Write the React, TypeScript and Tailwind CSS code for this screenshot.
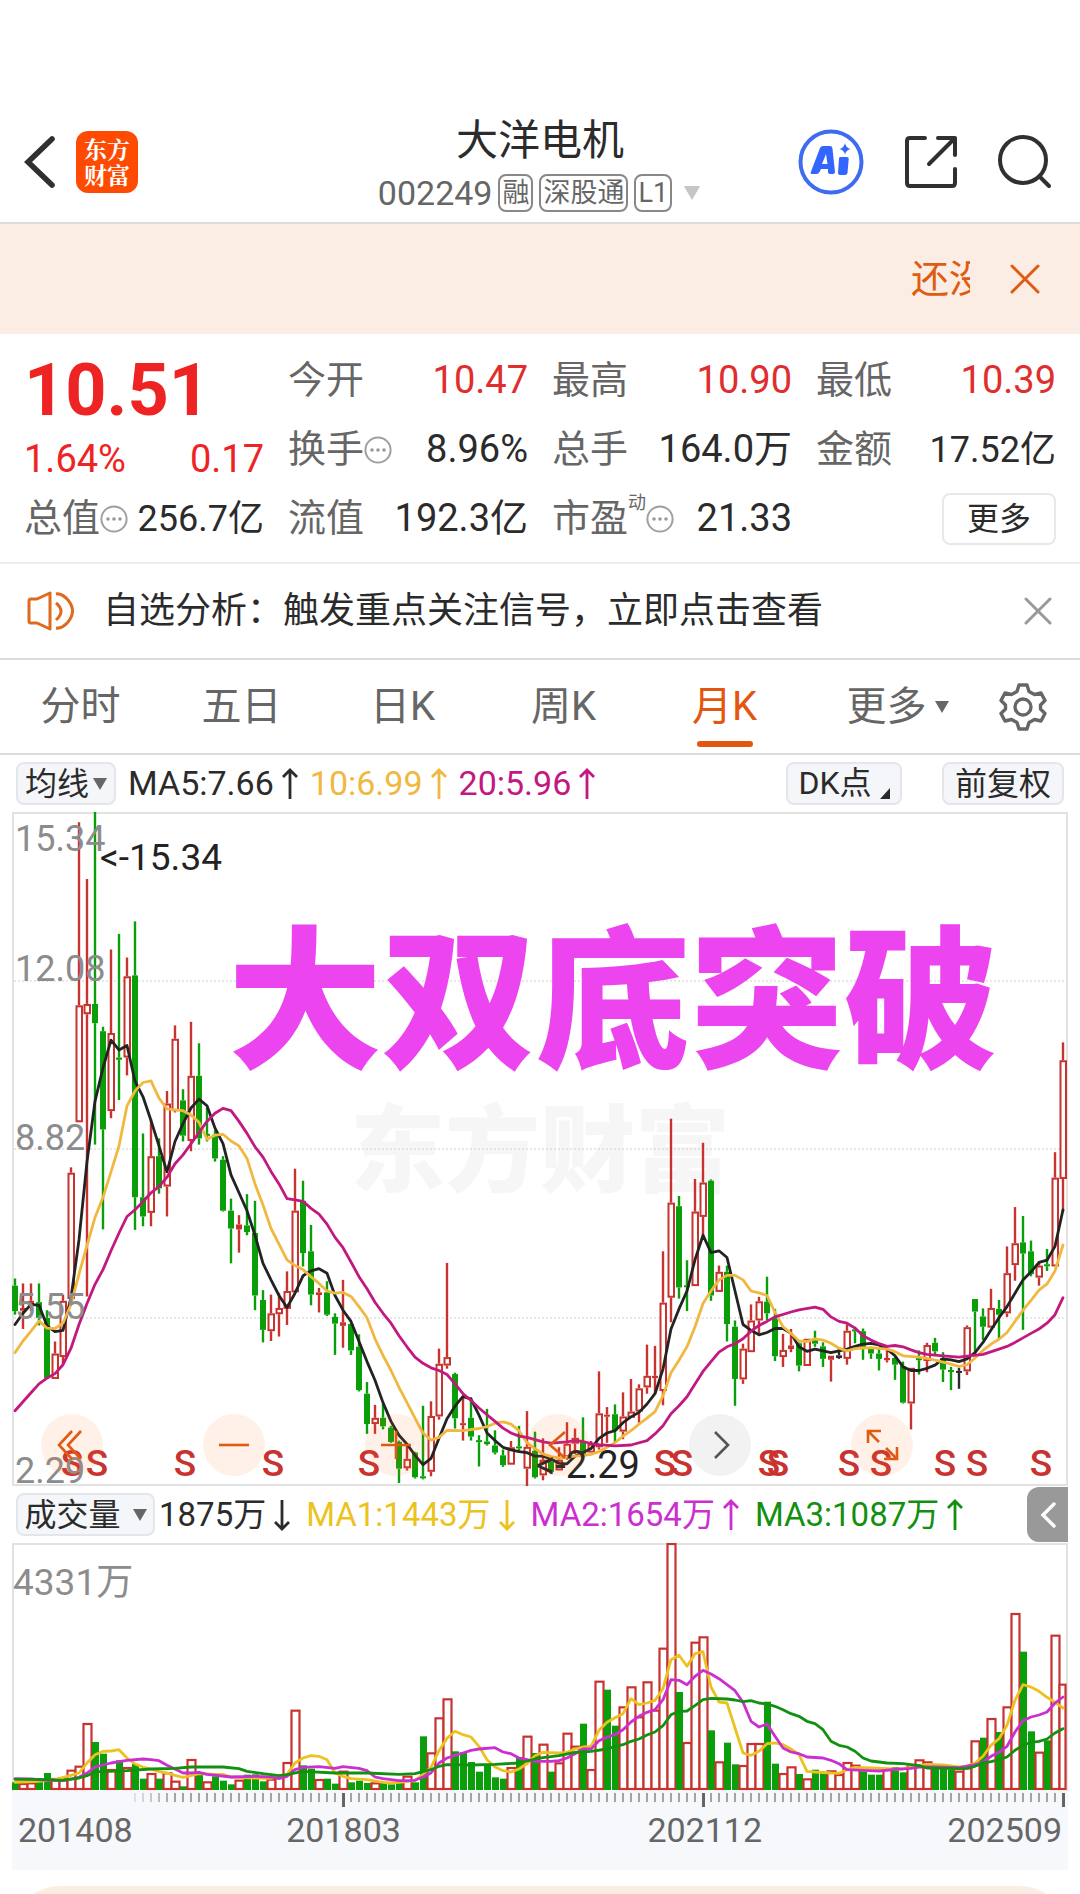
import React from "react";

type Tone = "r" | "g" | "k";
type Candle = [Tone, number, number, number, number];

const RED = "#c8332f";
const GREEN = "#0a9f0a";
const TONES: Record<Tone, string> = { r: RED, g: GREEN, k: "#2b2b2b" };

/* One candle per month: tone, high, body top, body bottom, low (plot units, downwards). */
const CANDLES = `g 1072 1088 1145 1153|r 1083 1138 1144 1185|r 1083 1122 1130 1145|g 1083 1125 1160 1177|g 1143 1160 1295 1297|r 1213 1240 1297 1297|r 1108 1122 1248 1265|r 823 835 1118 1118|r 50 460 722 722|r 177 457 480 1112|g 27 457 500 772|g 508 518 738 962|r 335 522 697 713|g 300 577 582 672|r 353 395 577 617|g 272 393 890 963|g 747 890 933 955|r 715 798 925 955|g 758 798 870 882|r 652 680 866 933|r 505 535 697 700|g 648 673 752 765|r 497 618 764 787|g 545 618 758 772|g 690 748 752 765|g 740 750 803 810|g 798 806 920 922|g 893 920 960 1038|r 930 951 962 1014|g 883 953 968 975|g 898 970 1110 1143|g 1098 1120 1187 1215|r 1108 1150 1190 1212|r 1105 1138 1152 1202|r 1056 1100 1140 1176|r 826 920 1103 1103|g 853 898 1015 1045|g 952 1011 1108 1132|r 1093 1103 1109 1148|g 1078 1103 1153 1156|g 1150 1158 1173 1243|r 1075 1170 1178 1227|g 1172 1174 1233 1243|g 1197 1225 1322 1325|g 1304 1330 1398 1420|r 1355 1384 1398 1420|g 1353 1384 1403 1410|g 1402 1406 1438 1440|g 1435 1438 1498 1530|r 1445 1476 1497 1502|g 1460 1462 1517 1520|g 1357 1515 1519 1522|r 1347 1380 1505 1515|r 1229 1263 1381 1388|r 1037 1248 1267 1274|g 1283 1286 1385 1408|r 1335 1396 1399 1435|g 1338 1384 1426 1435|g 1423 1434 1437 1493|g 1364 1437 1443 1446|g 1412 1446 1462 1466|g 1455 1468 1490 1494|r 1436 1450 1489 1489|g 1402 1448 1452 1458|r 1369 1449 1498 1538|g 1415 1458 1517 1520|r 1430 1478 1513 1524|g 1470 1482 1505 1510|r 1450 1478 1502 1502|r 1394 1442 1472 1478|r 1408 1429 1442 1465|g 1383 1438 1470 1475|r 1436 1442 1462 1462|r 1280 1374 1450 1455|r 1360 1377 1381 1440|g 1354 1376 1412 1440|r 1327 1381 1415 1432|r 1297 1370 1384 1384|r 1309 1318 1370 1395|r 1220 1290 1316 1330|r 1223 1290 1295 1330|r 1011 1126 1324 1356|r 714 902 1115 1170|g 887 910 1092 1117|g 1031 1087 1091 1145|r 849 922 1089 1089|r 768 857 934 975|g 850 853 1110 1122|r 1043 1057 1102 1102|g 1043 1057 1174 1213|g 1166 1180 1297 1357|r 1218 1229 1298 1308|r 1130 1166 1237 1237|r 1113 1123 1166 1195|g 1068 1124 1150 1165|g 1140 1158 1246 1257|r 1196 1232 1248 1270|r 1185 1222 1230 1237|g 1215 1217 1267 1280|r 1207 1207 1268 1268|g 1189 1206 1218 1225|g 1215 1224 1252 1270|r 1245 1245 1254 1303|k 1230 1244 1250 1252|r 1175 1189 1252 1265|g 1180 1186 1190 1217|g 1184 1190 1225 1254|g 1225 1227 1240 1252|g 1228 1240 1252 1278|r 1228 1250 1255 1260|g 1248 1250 1265 1299|g 1258 1268 1350 1352|r 1272 1272 1352 1410|g 1233 1250 1255 1287|r 1216 1221 1257 1282|g 1205 1216 1235 1243|g 1237 1250 1276 1304|g 1270 1277 1280 1322|k 1272 1279 1282 1319|r 1177 1181 1280 1288|g 1118 1118 1146 1243|g 1139 1157 1180 1210|r 1095 1138 1182 1182|g 1120 1140 1153 1208|r 1000 1060 1150 1158|r 912 993 1042 1077|g 932 991 1016 1187|g 987 1011 1062 1067|r 1037 1043 1070 1088|g 1006 1040 1044 1055|r 789 846 1045 1045|r 543 583 849 922`
  .split("|")
  .map((row) => {
    const [tone, ...n] = row.split(" ");
    return [tone, ...n.map(Number)] as Candle;
  });

/* Moving averages: "month,value" pairs. */
const MA5 =
  "0,1175 1,1150 2,1130 3,1132 4,1178 5,1191 6,1188 7,1115 8,985 9,810 10,675 11,600 12,538 13,560 14,550 15,630 16,665 17,718 18,775 19,833 20,765 21,725 22,690 23,670 24,685 25,735 26,770 27,840 28,880 29,920 30,975 31,1038 32,1075 33,1110 34,1137 35,1105 36,1066 37,1055 38,1050 39,1060 40,1110 41,1143 42,1168 43,1213 44,1258 45,1300 46,1350 47,1392 48,1423 49,1443 50,1468 51,1489 52,1475 53,1430 54,1386 55,1358 56,1336 57,1342 58,1378 59,1418 60,1435 61,1450 62,1456 63,1460 64,1462 65,1470 66,1470 67,1476 68,1486 69,1487 70,1470 71,1462 72,1453 73,1430 74,1418 75,1413 76,1395 77,1382 78,1372 79,1353 80,1330 81,1275 82,1185 83,1140 84,1100 85,1030 86,975 87,1014 88,1010 89,1025 90,1100 91,1175 92,1188 93,1198 94,1193 95,1184 96,1184 97,1195 98,1225 99,1235 100,1230 101,1234 102,1238 103,1234 104,1230 105,1224 106,1219 107,1217 108,1221 109,1230 110,1245 111,1270 112,1278 113,1278 114,1273 115,1266 116,1252 117,1254 118,1258 119,1252 120,1238 121,1215 122,1187 123,1160 124,1135 125,1105 126,1075 127,1057 128,1036 129,1031 130,1000 131,918";
const MA10 =
  "0,1238 1,1212 2,1190 3,1167 4,1183 5,1184 6,1172 7,1130 8,1062 9,998 10,935 11,890 12,833 13,775 14,685 15,652 16,633 17,629 18,668 19,692 20,694 21,696 22,706 23,722 24,760 25,751 26,749 27,764 28,775 29,803 30,860 31,907 32,960 33,995 34,1030 35,1043 36,1052 37,1068 38,1083 39,1100 40,1105 41,1103 42,1112 43,1135 44,1160 45,1207 46,1244 47,1278 48,1316 49,1350 50,1385 51,1418 52,1434 53,1428 54,1412 56,1413 58,1408 59,1404 60,1396 61,1393 62,1398 63,1413 64,1440 65,1453 66,1465 67,1471 68,1474 70,1470 71,1468 72,1466 73,1460 74,1450 75,1440 76,1425 77,1413 78,1398 79,1385 80,1370 81,1335 82,1283 83,1255 84,1225 85,1180 86,1128 87,1100 88,1075 89,1065 90,1065 91,1075 92,1100 93,1104 94,1110 95,1148 96,1180 97,1195 98,1212 99,1213 100,1207 101,1210 102,1217 103,1228 104,1234 105,1229 107,1227 109,1230 110,1236 111,1245 113,1248 114,1251 115,1255 117,1264 118,1269 119,1265 120,1250 121,1233 122,1219 123,1208 124,1193 125,1168 126,1143 127,1121 128,1098 129,1084 130,1055 131,997";
const MA20 =
  "0,1368 1,1348 2,1328 3,1308 4,1295 5,1285 6,1265 7,1228 8,1175 9,1128 10,1085 11,1052 12,1010 13,970 14,933 15,918 16,900 17,880 18,866 19,845 20,815 21,795 22,770 23,745 24,720 25,702 26,691 27,696 28,720 29,747 30,777 31,800 32,832 33,860 34,893 35,896 36,899 37,915 38,928 39,950 40,980 41,1003 42,1035 43,1068 44,1095 45,1125 46,1150 47,1172 48,1200 49,1225 50,1248 51,1262 52,1272 53,1278 54,1287 55,1308 56,1330 57,1345 58,1362 59,1377 60,1392 61,1407 62,1418 63,1425 64,1428 66,1438 67,1441 69,1438 70,1435 71,1437 72,1442 73,1444 75,1447 77,1445 79,1435 80,1420 81,1402 82,1375 83,1357 84,1337 85,1308 86,1280 87,1258 88,1237 89,1225 90,1218 91,1207 92,1190 93,1177 94,1168 95,1158 97,1147 98,1142 100,1136 101,1141 102,1158 103,1168 104,1172 105,1183 106,1200 107,1210 108,1218 109,1224 110,1222 111,1225 112,1232 113,1238 114,1242 116,1245 118,1248 119,1246 121,1242 123,1230 124,1224 125,1215 126,1205 127,1195 128,1185 129,1172 130,1153 131,1115";

/* Volume bars: tone and bar top. */
const VOLUMES =
  "g908 r910 r908 g905 g880 r895 r893 r870 r858 r730 g787 g822 r868 g842 r862 g853 g897 r880 g897 r878 r903 g920 r838 g878 r905 g890 g903 g914 r900 g885 g884 g905 r897 r890 r847 r690 g857 g867 r898 g897 g912 r873 g908 g903 g910 r908 g907 g914 g908 r888 g908 g770 r818 r713 r656 g815 g818 g847 g876 g853 g893 g897 r862 g832 r768 g820 r792 g876 r848 r759 r798 g732 r868 r603 g630 g738 r680 r620 r710 r605 r690 r504 r190 g637 r787 r486 r470 g752 r845 g789 g854 r856 r790 r790 g666 g852 r880 r860 g883 r896 g870 g880 r872 r883 r847 r855 g875 g885 g885 r868 g862 g878 r858 r839 r845 g866 g868 g870 r873 r863 r782 g774 r715 g757 r680 r400 g516 g755 r816 g782 r465 r612"
    .split(" ")
    .map((s) => [s[0], Number(s.slice(1))] as [Tone, number]);
const VMA1 =
  "0,908 3,905 5,900 7,887 8,880 9,850 10,825 11,815 12,814 13,810 14,835 15,853 16,862 17,868 18,876 19,880 20,887 21,893 22,888 23,882 25,884 26,884 27,892 30,895 32,896 34,884 35,850 36,835 37,828 38,830 39,840 40,880 41,890 42,897 44,900 46,908 47,910 49,906 50,902 51,884 52,863 53,813 54,776 55,755 56,765 57,772 58,800 59,840 60,862 61,873 62,877 63,868 64,852 65,828 66,818 68,820 69,818 70,808 71,802 72,800 73,752 74,728 75,714 76,702 77,657 78,675 79,670 80,662 81,627 82,540 83,527 84,560 85,522 86,516 87,622 88,667 89,670 90,745 91,820 92,827 93,815 94,792 95,790 96,795 97,808 98,825 99,875 100,877 102,880 103,881 104,870 105,863 107,865 110,868 111,868 112,862 113,857 114,854 116,856 118,862 119,860 120,850 121,830 122,797 123,777 124,737 125,662 126,615 127,622 128,635 129,653 130,668 131,685";
const VMA2 =
  "0,897 2,898 4,902 6,903 7,898 8,893 9,880 10,862 12,850 14,842 16,838 17,840 18,843 19,857 20,868 21,880 22,880 23,878 24,884 27,892 30,890 32,892 33,897 34,890 35,870 36,863 38,861 40,866 41,861 43,866 44,873 45,892 46,897 48,903 49,903 50,902 51,892 52,880 53,850 54,835 55,827 56,820 57,812 58,808 60,804 61,817 62,822 63,835 64,840 65,845 67,845 68,843 69,835 70,822 71,808 72,808 73,783 74,772 75,765 76,750 77,727 78,710 79,698 80,690 81,660 82,600 83,602 84,615 85,590 86,572 87,583 88,597 89,615 90,633 91,668 92,725 93,742 94,733 95,770 96,805 97,817 98,822 99,832 101,835 102,842 103,852 104,870 106,872 108,874 110,869 112,866 113,862 115,862 118,864 120,855 121,848 122,830 123,818 124,800 125,757 126,723 127,712 128,706 129,697 130,670 131,652";
const VMA3 =
  "0,899 3,899 6,902 8,895 9,888 10,876 11,876 14,873 17,868 20,866 22,862 26,862 28,867 29,875 31,882 33,888 34,885 36,875 40,880 44,880 48,884 50,882 52,870 53,860 54,855 57,856 60,854 63,850 65,838 66,834 68,828 70,818 72,815 74,808 75,800 76,795 77,785 78,778 79,766 80,757 81,738 82,705 83,695 84,694 85,678 86,660 87,656 89,658 90,661 91,666 92,663 93,670 94,673 95,680 96,690 97,702 98,710 99,725 100,732 101,750 102,785 103,797 104,802 105,815 106,835 107,844 109,850 111,852 112,855 113,858 114,865 116,866 118,867 119,866 120,860 121,850 122,846 123,840 124,832 125,812 126,797 127,788 128,785 129,778 130,760 131,747";

const monthX = (i: number) => 3 + 8 * i;
const priceY = (v: number) => (v - 27) / 2.24;
const volumeY = (v: number) => (v - 190) / 3;

const toPoints = (pairs: string, y: (v: number) => number) =>
  pairs
    .split(" ")
    .map((p) => {
      const [i, v] = p.split(",").map(Number);
      return `${monthX(i)},${y(v).toFixed(1)}`;
    })
    .join(" ");

function Line({ data, y, color }: { data: string; y: (v: number) => number; color: string }) {
  return <polyline points={toPoints(data, y)} fill="none" stroke={color} strokeWidth={2.8} strokeLinejoin="round" strokeLinecap="round" />;
}

const S_MARKS = [60, 85, 173, 261, 357, 653, 670, 757, 766, 837, 869, 933, 965, 1029];
const PRICE_LABELS: [string, number][] = [
  ["15.34", 39],
  ["12.08", 169],
  ["8.82", 338],
  ["5.55", 507],
  ["2.29", 671],
];

function PriceChart() {
  return (
    <svg viewBox="0 0 1056 674" className="block w-full font-['Roboto','Noto_Sans_CJK_SC',sans-serif]" role="img" aria-label="月K线图">
      <rect x="1" y="1" width="1054" height="672" fill="#fff" stroke="#e2e2e2" strokeWidth="2" />
      <text x="528" y="373" textAnchor="middle" fontSize="95" fontWeight="800" fill="#f6f6f6">
        东方财富
      </text>
      {[169, 337, 506].map((y) => (
        <line key={y} x1="2" x2="1054" y1={y} y2={y} stroke="#cfcfcf" strokeDasharray="2 2" />
      ))}
      {CANDLES.map(([tone, high, top, bottom, low], i) => {
        const x = monthX(i);
        const color = TONES[tone];
        const t = priceY(top);
        const h = Math.max(priceY(bottom) - t, 2);
        const hollow = tone === "r" && h > 5;
        return (
          <g key={i}>
            <line x1={x} x2={x} y1={priceY(high)} y2={t} stroke={color} strokeWidth={2.4} />
            <line x1={x} x2={x} y1={t + h} y2={priceY(low)} stroke={color} strokeWidth={2.4} />
            {hollow ? (
              <rect x={x - 2.5} y={t + 1} width={5.5} height={h - 2} fill="#fff" stroke={color} strokeWidth={2} />
            ) : (
              <rect x={x - 3} y={t} width={6} height={h} fill={color} />
            )}
          </g>
        );
      })}
      <Line data={MA5} y={priceY} color="#232323" />
      <Line data={MA10} y={priceY} color="#f0b840" />
      <Line data={MA20} y={priceY} color="#c2187f" />
      {S_MARKS.map((x) => (
        <text key={x} x={x} y={664} textAnchor="middle" fontSize="37" fontWeight="500" fill={RED}>
          S
        </text>
      ))}
      {PRICE_LABELS.map(([label, y]) => (
        <text key={label} x={3} y={y} fontSize="36" fill="#8c8c8c">
          {label}
        </text>
      ))}
      <text x="88" y="58" fontSize="37" fill="#232323">
        &lt;-15.34
      </text>
      <text x="524" y="666" fontSize="38" fill="#232323">
        &lt;-2.29
      </text>
      <text x="601" y="245" textAnchor="middle" fontSize="154" fontWeight="900" fill="#ec45ef">
        大双底突破
      </text>
    </svg>
  );
}

function VolumeChart() {
  return (
    <svg viewBox="0 0 1056 248" className="block w-full font-['Roboto','Noto_Sans_CJK_SC',sans-serif]" role="img" aria-label="成交量图">
      <path d="M1 248V1H1055V248" fill="none" stroke="#e2e2e2" strokeWidth="2" />
      <text x="1" y="52" fontSize="37" fill="#8c8c8c">
        4331万
      </text>
      {VOLUMES.map(([tone, top], i) => {
        const y = volumeY(top);
        const x = monthX(i);
        return tone === "g" ? (
          <rect key={i} x={x - 3} y={y} width={7} height={247 - y} fill={GREEN} />
        ) : (
          <rect key={i} x={x - 3.5} y={y + 1} width={i === 131 ? 6 : 8} height={245 - y} fill="#fff" stroke={RED} strokeWidth={2.2} />
        );
      })}
      <Line data={VMA1} y={volumeY} color="#ecc21f" />
      <Line data={VMA2} y={volumeY} color="#cc2fd0" />
      <Line data={VMA3} y={volumeY} color="#12900f" />
    </svg>
  );
}

function Ticks() {
  return (
    <svg viewBox="0 0 1056 14" className="block w-full" aria-hidden="true">
      {Array.from({ length: 117 }, (_, k) => {
        const i = k + 15;
        const major = i === 41 || i === 86 || i === 131;
        return (
          <rect key={i} x={monthX(i) - 1} y={0} width={major ? 3 : 2} height={major ? 14 : 9} fill={major ? "#666" : "#a3a3a3"} opacity={Math.min(1, (i - 13) / 7)} />
        );
      })}
    </svg>
  );
}

function Arrow({ down = false }: { down?: boolean }) {
  return (
    <svg viewBox="0 0 16 32" className="h-8 w-4 shrink-0" fill="none" stroke="currentColor" strokeWidth="2.8" aria-hidden="true">
      <path d={down ? "M8 1V30M1 23L8 30L15 23" : "M8 31V2M1 9L8 2L15 9"} />
    </svg>
  );
}

function Triangle({ className }: { className: string }) {
  return (
    <svg viewBox="0 0 14 12" className={className} fill="currentColor" aria-hidden="true">
      <path d="M0 0H14L7 12Z" />
    </svg>
  );
}

function Info() {
  return (
    <svg viewBox="0 0 28 28" className="h-7 w-7 shrink-0" aria-hidden="true">
      <circle cx="14" cy="14" r="12.6" fill="none" stroke="#a0a0a0" strokeWidth="2" />
      <circle cx="8" cy="14" r="1.8" fill="#999" />
      <circle cx="14" cy="14" r="1.8" fill="#999" />
      <circle cx="20" cy="14" r="1.8" fill="#999" />
    </svg>
  );
}

type CellProps = { label: string; value: string; red?: boolean; info?: boolean; compact?: boolean; sup?: string };

function Cell({ label, value, red = false, info = false, compact = false, sup }: CellProps) {
  return (
    <div className="flex h-[69px] items-center justify-between whitespace-nowrap">
      <div className="flex items-center text-[38px] text-[#666]">
        {label}
        {sup && <sup className="-top-4 text-lg">{sup}</sup>}
        {info && <Info />}
      </div>
      <div className={red ? "text-[38px] text-[#e02d2d]" : compact ? "text-4xl" : "text-[38px]"}>{value}</div>
    </div>
  );
}

const TABS = ["分时", "五日", "日K", "周K", "月K"];

const TOOLS: { label: string; path: string; grey?: boolean }[] = [
  { label: "最左", path: "M31 17L18 31L31 45M40 17L27 31L40 45" },
  { label: "缩小", path: "M16 31H46" },
  { label: "放大", path: "M16 31H46M31 17V45" },
  { label: "左移", path: "M38 18L23 31L38 44" },
  { label: "右移", path: "M26 18L39 31L26 44", grey: true },
  { label: "全屏", path: "M17 29V17H30M17 17L28 28M46 33V45H33M46 45L35 34" },
];

export default function App() {
  return (
    <div className="min-h-screen overflow-hidden bg-white font-['Roboto','Noto_Sans_CJK_SC',sans-serif] text-[#2b2b2b]">
      <header className="grid h-56 grid-cols-[1fr_auto_1fr] border-b-2 border-[#d9dcdc] pt-[108px]">
        <div className="flex h-[108px] items-center gap-5 pl-6">
          <button aria-label="返回">
            <svg viewBox="0 0 32 52" className="h-[52px] w-8" fill="none" stroke="#303030" strokeWidth="5.600" strokeLinecap="round">
              <path d="M28 3L4 26L28 49" />
            </svg>
          </button>
          <button className="flex h-[62px] w-[62px] flex-col items-center justify-center rounded-xl bg-[#ff4a02] font-['Noto_Serif_CJK_SC','Noto_Sans_CJK_SC',serif] text-[23px] leading-[26px] font-bold text-white">
            <span>东方</span>
            <span>财富</span>
          </button>
        </div>
        <div className="flex flex-col items-center pt-0.5">
          <h1 className="text-[42px] leading-[62px]">大洋电机</h1>
          <button className="flex items-center gap-1.5 text-[#666]">
            <span className="text-[34px] leading-[42px]">002249</span>
            <span className="rounded-lg border-2 border-[#888] px-[2px] text-[27px] leading-[34px]">融</span>
            <span className="rounded-lg border-2 border-[#888] px-[2px] text-[27px] leading-[34px]">深股通</span>
            <span className="rounded-lg border-2 border-[#888] px-[2px] text-[27px] leading-[34px]">L1</span>
            <Triangle className="ml-1 h-3.5 w-5 text-[#c6c6c6]" />
          </button>
        </div>
        <div className="flex h-[108px] items-center justify-end gap-10 pr-7">
          <button aria-label="Ai">
            <svg viewBox="0 0 66 66" className="h-[66px] w-[66px]">
              <circle cx="33" cy="33" r="30.5" fill="none" stroke="#3d6cf0" strokeWidth="4" />
              <path fill="#3366ff" fillRule="evenodd" d="M22 19Q23 17 25 17H32Q34 17 34.400 19L37 43Q37 45 35 45H32Q30 45 30 43V40H23L21.500 43Q20.500 45 18.500 45H14Q12 45 13 42.500ZM28 25L24 35H29.500ZM42 28H49Q51 28 50.700 30L49.500 44Q49 46 47 46H42Q40 46 40 44L41 30Q41 28 42 28ZM47 14Q48 19 52.500 20Q48 21 47 25.500Q46 21 41.500 20Q46 19 47 14Z" />
            </svg>
          </button>
          <button aria-label="分享">
            <svg viewBox="0 0 54 54" className="h-[54px] w-[54px]" fill="none" stroke="#303030" strokeWidth="4" strokeLinecap="round" strokeLinejoin="round">
              <path d="M21 3H6Q3 3 3 6V48Q3 51 6 51H48Q51 51 51 48V34M34 3H51V20M51 3L25 29" />
            </svg>
          </button>
          <button aria-label="搜索">
            <svg viewBox="0 0 54 54" className="h-[54px] w-[54px]" fill="none" stroke="#303030" strokeWidth="4" strokeLinecap="round">
              <circle cx="25" cy="25" r="23" />
              <path d="M41.500 41.500L51 51" />
            </svg>
          </button>
        </div>
      </header>

      <div className="flex h-[110px] items-center justify-end gap-10 bg-[#fcede4] pr-10 text-[#df5b12]">
        <div className="w-[59px] overflow-hidden text-[38px] whitespace-nowrap">还没</div>
        <button aria-label="关闭公告">
          <svg viewBox="0 0 30 30" className="h-[30px] w-[30px]" fill="none" stroke="currentColor" strokeWidth="3" strokeLinecap="round">
            <path d="M2 2L28 28M28 2L2 28" />
          </svg>
        </button>
      </div>

      <section className="grid grid-cols-4 gap-x-6 border-b-2 border-[#ececec] px-6 pt-3 pb-[9px]">
        <div className="row-span-2 h-[138px] text-[#ee2323]">
          <div className="pt-2 text-[72px] leading-[74px] font-bold">10.51</div>
          <div className="flex justify-between pt-1 text-[38px] leading-[54px]">
            <span>1.64%</span>
            <span>0.17</span>
          </div>
        </div>
        <Cell label="今开" value="10.47" red />
        <Cell label="最高" value="10.90" red />
        <Cell label="最低" value="10.39" red />
        <Cell label="换手" value="8.96%" info />
        <Cell label="总手" value="164.0万" />
        <Cell label="金额" value="17.52亿" compact />
        <Cell label="总值" value="256.7亿" info compact />
        <Cell label="流值" value="192.3亿" />
        <Cell label="市盈" value="21.33" sup="动" info />
        <div className="flex h-[69px] items-center justify-end">
          <button className="h-[52px] w-[114px] rounded-lg border-2 border-[#e8e8e8] text-[32px] leading-none">更多</button>
        </div>
      </section>

      <section className="flex h-24 items-center border-b-2 border-[#dcdcdc] pr-7 pl-[27px]">
        <svg viewBox="0 0 48 40" className="h-10 w-12" fill="none" stroke="#df6a1c" strokeWidth="3" strokeLinejoin="round" aria-hidden="true">
          <path d="M2 10Q2 8 4 8H10L23 2V38L10 32H4Q2 32 2 30Z" />
          <path d="M29 12Q39 20 29 29M29 3Q35 2 41 9Q50 20 41 31Q35 38 29 37" />
        </svg>
        <a href="#signals" className="ml-7 flex-1 text-4xl whitespace-nowrap">
          自选分析：触发重点关注信号，立即点击查看
        </a>
        <button aria-label="关闭提示">
          <svg viewBox="0 0 28 28" className="h-7 w-7" fill="none" stroke="#999" strokeWidth="3" strokeLinecap="round">
            <path d="M2 2L26 26M26 2L2 26" />
          </svg>
        </button>
      </section>

      <nav className="grid h-[95px] grid-cols-[repeat(6,161fr)_114fr] items-stretch border-b-2 border-[#dcdcdc] text-[40px] text-[#666]">
        {TABS.map((t) =>
          t === "月K" ? (
            <button key={t} aria-current="true" className="relative text-[#e2560f]">
              {t}
              <span className="absolute bottom-1.5 left-1/2 h-1.5 w-14 -translate-x-1/2 rounded-full bg-[#e2560f]" />
            </button>
          ) : (
            <button key={t}>{t}</button>
          ),
        )}
        <button className="flex items-center justify-center gap-2 pl-6">
          更多
          <Triangle className="h-3 w-3.5" />
        </button>
        <button aria-label="设置" className="flex items-center justify-center">
          <svg viewBox="0 0 48 48" className="h-12 w-12" fill="none" stroke="#666" strokeWidth="3.400" strokeLinejoin="round">
            <path d="M20 2H28L30 8.500L35.500 11.500L42 10L46 17.500L41.500 22V26L46 30.500L42 38L35.500 36.500L30 39.500L28 46H20L18 39.500L12.500 36.500L6 38L2 30.500L6.500 26V22L2 17.500L6 10L12.500 11.500L18 8.500Z" />
            <circle cx="24" cy="24" r="8" />
          </svg>
        </button>
      </nav>

      <div className="flex h-[57px] items-center px-4 text-[34px] whitespace-nowrap">
        <button className="flex h-[43px] w-[100px] items-center justify-center gap-1 rounded-lg border-2 border-[#e3e6ea] bg-[#f5f6f9] text-[32px] leading-none">
          均线
          <Triangle className="h-3 w-3.5 text-[#666]" />
        </button>
        <span className="ml-3 flex items-center gap-2">
          MA5:7.66 <Arrow />
        </span>
        <span className="ml-3 flex items-center gap-2 text-[#f0b840]">
          10:6.99 <Arrow />
        </span>
        <span className="ml-3 flex items-center gap-2 text-[#c2187f]">
          20:5.96 <Arrow />
        </span>
        <button className="ml-auto flex h-[43px] w-[116px] items-end justify-center gap-2 rounded-lg border-2 border-[#e3e6ea] bg-[#f5f6f9] text-[32px] leading-[40px]">
          DK点
          <svg viewBox="0 0 10 11" className="mb-1 h-[11px] w-2.5" fill="#2b2b2b" aria-hidden="true">
            <path d="M10 0V11H0Z" />
          </svg>
        </button>
        <button className="ml-10 h-[43px] w-[122px] rounded-lg border-2 border-[#e3e6ea] bg-[#f5f6f9] text-[32px] leading-none">前复权</button>
      </div>

      <main className="mx-3">
        <div className="relative">
          <PriceChart />
          <div className="absolute inset-x-0 bottom-[10px] flex gap-[100px] pl-[29px]">
            {TOOLS.map((t) => (
              <button key={t.label} aria-label={t.label} className={t.grey ? "rounded-full bg-black/5 text-[#555]" : "rounded-full bg-[#ff6a1a]/10 text-[#df5b12]"}>
                <svg viewBox="0 0 62 62" className="h-[62px] w-[62px]" fill="none" stroke="currentColor" strokeWidth="2.600">
                  <path d={t.path} />
                </svg>
              </button>
            ))}
          </div>
        </div>

        <div className="flex h-[57px] items-center pl-1 text-[33px] whitespace-nowrap">
          <button className="flex h-[43px] w-[139px] items-center justify-center gap-3 rounded-lg border-2 border-[#e3e6ea] bg-[#f5f6f9] text-[32px] leading-none">
            成交量
            <Triangle className="h-3 w-3.5 text-[#666]" />
          </button>
          <span className="ml-1 flex items-center gap-2">
            1875万 <Arrow down />
          </span>
          <span className="ml-4 flex items-center gap-2 text-[#ecc21f]">
            MA1:1443万 <Arrow down />
          </span>
          <span className="ml-4 flex items-center gap-2 text-[#cc2fd0]">
            MA2:1654万 <Arrow />
          </span>
          <span className="ml-4 flex items-center gap-2 text-[#12900f]">
            MA3:1087万 <Arrow />
          </span>
          <button aria-label="展开指标" className="ml-auto flex h-[55px] w-[41px] items-center justify-center rounded-l-xl bg-[#999]">
            <svg viewBox="0 0 16 26" className="h-[26px] w-4" fill="none" stroke="#fff" strokeWidth="3.400" strokeLinecap="round">
              <path d="M14 2L3 13L14 24" />
            </svg>
          </button>
        </div>

        <VolumeChart />
        <div className="bg-[#f7f8fb] pt-0.5">
          <Ticks />
          <div className="relative flex h-[63px] items-center justify-between px-1.5 pb-4 text-[34px] text-[#666]">
            <span>201408</span>
            <span className="absolute left-[31.4%] -translate-x-1/2">201803</span>
            <span className="absolute left-[65.6%] -translate-x-1/2">202112</span>
            <span>202509</span>
          </div>
        </div>
        <div className="mt-4 h-2 overflow-hidden">
          <div className="h-24 rounded-t-[48px] bg-[#fcede4]" />
        </div>
      </main>
    </div>
  );
}
